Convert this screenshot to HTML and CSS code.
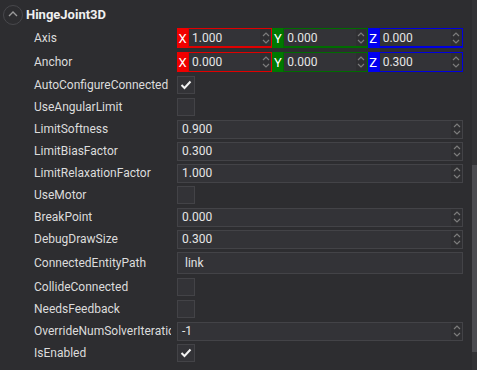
FILE: index.html
```html
<!DOCTYPE html>
<html lang="en-US">
    <head>
        <meta charset="utf-8">
        <link rel="stylesheet" href="styles.css">
    </head>
    <body>
        <div class="panel">
            <div class="content">
                <div class="header">
                    <span class="collapse">
                        <svg width="10" height="6" viewBox="0 0 10 6"><path d="M1 5 L5 1 L9 5" fill="none" stroke="#9a9a9a" stroke-width="1.4"/></svg>
                    </span>
                    <span class="title">HingeJoint3D</span>
                </div>

                <div class="row vecrow first">
                    <div class="label">Axis</div>
                    <div class="vec3">
                        <div class="axis x"><span class="tag">X</span><div class="num"><span class="txt">1.000</span><span class="spin"><svg width="8" height="16" viewBox="0 0 8 16"><path d="M1 6 L4 3 L7 6 M1 10 L4 13 L7 10" fill="none" stroke="#7c7c7c" stroke-width="1.2"/></svg></span></div></div>
                        <div class="axis y"><span class="tag">Y</span><div class="num"><span class="txt">0.000</span><span class="spin"><svg width="8" height="16" viewBox="0 0 8 16"><path d="M1 6 L4 3 L7 6 M1 10 L4 13 L7 10" fill="none" stroke="#7c7c7c" stroke-width="1.2"/></svg></span></div></div>
                        <div class="axis z"><span class="tag">Z</span><div class="num"><span class="txt">0.000</span><span class="spin"><svg width="8" height="16" viewBox="0 0 8 16"><path d="M1 6 L4 3 L7 6 M1 10 L4 13 L7 10" fill="none" stroke="#7c7c7c" stroke-width="1.2"/></svg></span></div></div>
                    </div>
                </div>
                <div class="row vecrow">
                    <div class="label">Anchor</div>
                    <div class="vec3">
                        <div class="axis x"><span class="tag">X</span><div class="num"><span class="txt">0.000</span><span class="spin"><svg width="8" height="16" viewBox="0 0 8 16"><path d="M1 6 L4 3 L7 6 M1 10 L4 13 L7 10" fill="none" stroke="#7c7c7c" stroke-width="1.2"/></svg></span></div></div>
                        <div class="axis y"><span class="tag">Y</span><div class="num"><span class="txt">0.000</span><span class="spin"><svg width="8" height="16" viewBox="0 0 8 16"><path d="M1 6 L4 3 L7 6 M1 10 L4 13 L7 10" fill="none" stroke="#7c7c7c" stroke-width="1.2"/></svg></span></div></div>
                        <div class="axis z"><span class="tag">Z</span><div class="num"><span class="txt">0.300</span><span class="spin"><svg width="8" height="16" viewBox="0 0 8 16"><path d="M1 6 L4 3 L7 6 M1 10 L4 13 L7 10" fill="none" stroke="#7c7c7c" stroke-width="1.2"/></svg></span></div></div>
                    </div>
                </div>

                <div class="row">
                    <div class="label">AutoConfigureConnected</div>
                    <div class="check"><svg width="12" height="10" viewBox="0 0 12 10"><path d="M1.5 5 L4.5 8 L10.5 1.5" fill="none" stroke="#f2f2f2" stroke-width="2"/></svg></div>
                </div>
                <div class="row">
                    <div class="label">UseAngularLimit</div>
                    <div class="check"></div>
                </div>
                <div class="row">
                    <div class="label">LimitSoftness</div>
                    <div class="num wide"><span class="txt">0.900</span><span class="spin"><svg width="8" height="16" viewBox="0 0 8 16"><path d="M1 6 L4 3 L7 6 M1 10 L4 13 L7 10" fill="none" stroke="#7c7c7c" stroke-width="1.2"/></svg></span></div>
                </div>
                <div class="row">
                    <div class="label">LimitBiasFactor</div>
                    <div class="num wide"><span class="txt">0.300</span><span class="spin"><svg width="8" height="16" viewBox="0 0 8 16"><path d="M1 6 L4 3 L7 6 M1 10 L4 13 L7 10" fill="none" stroke="#7c7c7c" stroke-width="1.2"/></svg></span></div>
                </div>
                <div class="row">
                    <div class="label">LimitRelaxationFactor</div>
                    <div class="num wide"><span class="txt">1.000</span><span class="spin"><svg width="8" height="16" viewBox="0 0 8 16"><path d="M1 6 L4 3 L7 6 M1 10 L4 13 L7 10" fill="none" stroke="#7c7c7c" stroke-width="1.2"/></svg></span></div>
                </div>
                <div class="row">
                    <div class="label">UseMotor</div>
                    <div class="check"></div>
                </div>
                <div class="row">
                    <div class="label">BreakPoint</div>
                    <div class="num wide"><span class="txt">0.000</span><span class="spin"><svg width="8" height="16" viewBox="0 0 8 16"><path d="M1 6 L4 3 L7 6 M1 10 L4 13 L7 10" fill="none" stroke="#7c7c7c" stroke-width="1.2"/></svg></span></div>
                </div>
                <div class="row">
                    <div class="label">DebugDrawSize</div>
                    <div class="num wide"><span class="txt">0.300</span><span class="spin"><svg width="8" height="16" viewBox="0 0 8 16"><path d="M1 6 L4 3 L7 6 M1 10 L4 13 L7 10" fill="none" stroke="#7c7c7c" stroke-width="1.2"/></svg></span></div>
                </div>
                <div class="row tall">
                    <div class="label">ConnectedEntityPath</div>
                    <div class="text wide">link</div>
                </div>
                <div class="row">
                    <div class="label">CollideConnected</div>
                    <div class="check"></div>
                </div>
                <div class="row">
                    <div class="label">NeedsFeedback</div>
                    <div class="check"></div>
                </div>
                <div class="row">
                    <div class="label">OverrideNumSolverIterations</div>
                    <div class="num wide"><span class="txt">-1</span><span class="spin"><svg width="8" height="16" viewBox="0 0 8 16"><path d="M1 6 L4 3 L7 6 M1 10 L4 13 L7 10" fill="none" stroke="#7c7c7c" stroke-width="1.2"/></svg></span></div>
                </div>
                <div class="row">
                    <div class="label">IsEnabled</div>
                    <div class="check"><svg width="12" height="10" viewBox="0 0 12 10"><path d="M1.5 5 L4.5 8 L10.5 1.5" fill="none" stroke="#f2f2f2" stroke-width="2"/></svg></div>
                </div>
            </div>
            <div class="scrollbar">
                <div class="thumb"></div>
            </div>
        </div>
    </body>
</html>
```

FILE: styles.css
```css
body{
    margin: 0;
    background-color: #2d2d30;
    font-family: Roboto, "Liberation Sans", sans-serif;
    font-size: 12px;
    color: #e2e2e2;
    overflow: hidden;
}
div.panel{
    display: flex;
    width: 477px;
    height: 370px;
}
div.content{
    flex: 1;
    display: flex;
    flex-direction: column;
    padding-right: 9px;
}
div.header{
    height: 26px;
    display: flex;
    align-items: center;
    padding-left: 3px;
}
span.collapse{
    width: 18px;
    height: 18px;
    border: 1px solid #48484c;
    border-radius: 50%;
    display: flex;
    align-items: center;
    justify-content: center;
    margin-top: 3px;
}
span.collapse svg{
    margin-top: -1px;
}
span.title{
    font-size: 13px;
    font-weight: bold;
    color: #f0f0f0;
    margin-left: 3px;
    margin-top: 2px;
}
div.row{
    height: 22px;
    display: flex;
    align-items: center;
}
div.row.vecrow{
    height: 24px;
}
div.row.tall{
    height: 26px;
}
div.label{
    width: 137px;
    padding-left: 34px;
    margin-right: 6px;
    white-space: nowrap;
    overflow: hidden;
    text-overflow: clip;
    color: #dcdcdc;
}
div.vec3{
    flex: 1;
    display: flex;
}
div.axis{
    flex: 1;
    display: flex;
    height: 20px;
}
span.tag{
    width: 11px;
    display: flex;
    align-items: center;
    justify-content: center;
    color: #fff;
    font-size: 13px;
}
div.axis.x span.tag{ background-color: #f00000; }
div.axis.y span.tag{ background-color: #007800; }
div.axis.z span.tag{ background-color: #0000f0; }
div.axis div.num{
    flex: 1;
    padding-left: 3px;
}
div.axis.x div.num{ border-color: #e00000; }
div.axis.y div.num{ border-color: #006c00; }
div.axis.z div.num{ border-color: #0000e0; }
div.row.first div.axis div.num{
    border-bottom-width: 2px;
}
div.num{
    display: flex;
    align-items: center;
    height: 100%;
    box-sizing: border-box;
    background-color: #333337;
    border: 1px solid #434347;
    padding-left: 4px;
}
div.num.wide, div.text.wide{
    flex: 1;
    height: 19px;
}
span.txt{
    flex: 1;
    color: #e6e6e6;
}
span.spin{
    width: 11px;
    align-self: stretch;
    display: flex;
    align-items: center;
    justify-content: center;
    background-color: #2f2f32;
}
div.text.wide{
    height: 22px;
    display: flex;
    align-items: center;
    box-sizing: border-box;
    background-color: #333337;
    border: 1px solid #434347;
    padding-left: 7px;
}
div.check{
    width: 18px;
    height: 18px;
    box-sizing: border-box;
    background-color: #333337;
    border: 1px solid #434347;
    display: flex;
    align-items: center;
    justify-content: center;
}
div.scrollbar{
    width: 5px;
    background-color: #333336;
    display: flex;
    flex-direction: column;
}
div.thumb{
    margin-top: 165px;
    height: 187px;
    background-color: #4c4c50;
}
```
